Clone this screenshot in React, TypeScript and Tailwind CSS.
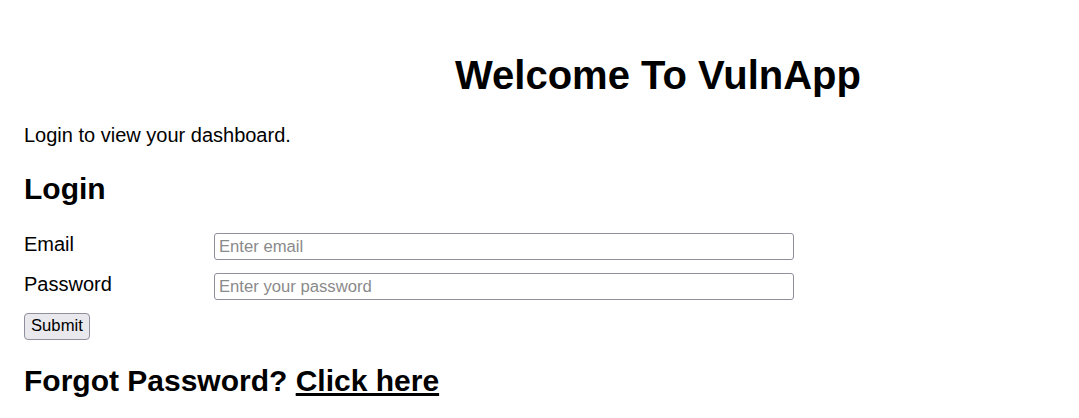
const App = () => {
  return (
    <div className="min-h-[418px] bg-white pl-[24px] pt-[52px] font-['Liberation_Sans',Arial,sans-serif] text-black">
      {/* Title */}
      <h1 className="pl-[431px] text-[40px] font-bold leading-[46px]">Welcome To VulnApp</h1>

      <p className="mt-[26px] text-[20px] leading-[23px]">Login to view your dashboard.</p>

      <h2 className="mt-[25px] text-[30px] font-bold leading-[34px]">Login</h2>

      {/* Form */}
      <form className="mt-[27px] flex flex-col gap-[13px]" onSubmit={(e) => e.preventDefault()}>
        <div className="flex items-start">
          <label className="w-[190px] text-[20px] leading-[23px]">Email</label>
          <input
            type="email"
            placeholder="Enter email"
            className="h-[27px] w-[580px] rounded-[3px] border border-[#8f8f9d] px-[4px] text-[16.67px] placeholder:text-[#8a8a8a] outline-none"
          />
        </div>
        <div className="flex items-start">
          <label className="w-[190px] text-[20px] leading-[23px]">Password</label>
          <input
            type="password"
            placeholder="Enter your password"
            className="h-[27px] w-[580px] rounded-[3px] border border-[#8f8f9d] px-[4px] text-[16.67px] placeholder:text-[#8a8a8a] outline-none"
          />
        </div>
        <div>
          <button
            type="submit"
            className="h-[27px] rounded-[4px] border border-[#8f8f9d] bg-[#e9e9ed] px-[6px] text-[16.67px] leading-none"
          >
            Submit
          </button>
        </div>
      </form>

      <h2 className="mt-[24px] text-[30px] font-bold leading-[34px]">
        Forgot Password? <a href="#" className="text-black underline">Click here</a>
      </h2>
    </div>
  );
};

export default App;
